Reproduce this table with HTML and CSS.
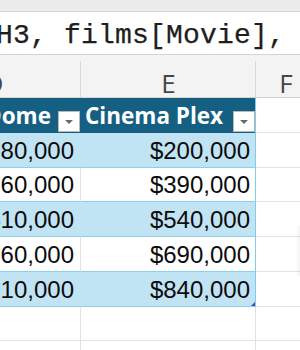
FILE: index.html
```html
<!DOCTYPE html>
<html>
<head>
<meta charset="utf-8">
<link rel="stylesheet" href="styles.css">
</head>
<body>
<div class="topband"></div>
<div class="formula"><span class="ftext">H3, films[Movie],</span></div>
<div class="sheet">
  <div class="colhead">D</div>
  <div class="colhead">E</div>
  <div class="colhead last">F</div>

  <div class="th lead"><span class="lbl">Cinema Dome</span><span class="dd"></span></div>
  <div class="th"><span class="lbl">Cinema Plex</span><span class="dd"></span></div>
  <div class="cell"></div>

  <div class="td d band">$180,000</div>
  <div class="td e band">$200,000</div>
  <div class="cell"></div>

  <div class="td d">$360,000</div>
  <div class="td e">$390,000</div>
  <div class="cell"></div>

  <div class="td d band">$410,000</div>
  <div class="td e band">$540,000</div>
  <div class="cell"></div>

  <div class="td d">$560,000</div>
  <div class="td e">$690,000</div>
  <div class="cell"></div>

  <div class="td d band">$510,000</div>
  <div class="td e band corner">$840,000</div>
  <div class="cell"></div>

  <div class="cell grid"></div>
  <div class="cell grid"></div>
  <div class="cell"></div>

  <div class="cell grid"></div>
  <div class="cell grid"></div>
  <div class="cell"></div>
</div>
<div class="pane-shadow"></div>
</body>
</html>
```

FILE: styles.css
```css
html, body {
  margin: 0;
  padding: 0;
  width: 300px;
  height: 350px;
  overflow: hidden;
  background: #ffffff;
  position: relative;
}

.topband {
  height: 11px;
  background: #ececec;
  border-bottom: 1px solid #d6d6d6;
}

.formula {
  box-sizing: border-box;
  height: 43px;
  padding-top: 5px;
  background: #ffffff;
  border-bottom: 1px solid #d4d4d4;
  white-space: nowrap;
  overflow: hidden;
  font-family: "Liberation Mono", "DejaVu Sans Mono", monospace;
  font-size: 28px;
  letter-spacing: 0.2px;
  line-height: 37px;
  color: #1e1e1e;
  -webkit-text-stroke: 0.25px #1e1e1e;
}

.ftext {
  display: block;
  margin-left: -4px;
}

.sheet {
  display: grid;
  grid-template-columns: 174px 175px 60px;
  grid-template-rows: 43px 35px 35px 34px 35px 35px 35px 34px 34px;
  margin-left: -93px;
}

.colhead {
  box-sizing: border-box;
  background: #f3f3f3 linear-gradient(#d8d8d8, #d8d8d8) right 6px / 1px calc(100% - 6px) no-repeat;
  border-bottom: 1px solid #d4d4d4;
  font-family: "Open Sans", sans-serif;
  font-size: 26px;
  color: #454545;
  display: flex;
  justify-content: center;
  align-items: flex-end;
  line-height: 1;
  padding-bottom: 1px;
}

.colhead.last {
  background: #f3f3f3;
}

.th {
  box-sizing: border-box;
  background: #156082;
  color: #ffffff;
  font-family: "Open Sans", sans-serif;
  font-weight: 700;
  font-size: 22.5px;
  line-height: 1;
  display: flex;
  align-items: flex-end;
  padding-left: 4px;
  border-right: 1px solid #156082;
}

.th + .th {
  border-right: 1px solid #83caeb;
}

.th .lbl {
  flex: 1;
  padding-bottom: 6px;
  white-space: nowrap;
}

.th.lead {
  justify-content: flex-end;
}

.th.lead .lbl {
  flex: none;
  margin-right: 7px;
}

.dd {
  flex: none;
  box-sizing: border-box;
  width: 22px;
  height: 21px;
  margin-bottom: 1px;
  background: #ffffff;
  border: 1px solid #b8b8b8;
  display: flex;
  align-items: center;
  justify-content: center;
}

.dd::after {
  content: "";
  width: 0;
  height: 0;
  border-left: 4px solid transparent;
  border-right: 4px solid transparent;
  border-top: 4px solid #6a6a6a;
}

.td {
  box-sizing: border-box;
  background: #ffffff;
  border-bottom: 1px solid #8fcfee;
  font-family: "Liberation Sans", Arial, sans-serif;
  font-size: 24px;
  line-height: 1.15;
  color: #0c0c0c;
  display: flex;
  justify-content: flex-end;
  align-items: flex-end;
  padding-right: 5px;
  padding-bottom: 2px;
  white-space: nowrap;
  overflow: hidden;
}

.td.d {
  border-right: 1px solid #e2e2e2;
  padding-right: 6px;
}

.td.e {
  border-right: 1px solid #83caeb;
}

.td.band {
  background: #c1e4f5;
}

.td.d.band {
  border-right-color: #c1e4f5;
}

.td.corner {
  position: relative;
}

.td.corner::after {
  content: "";
  position: absolute;
  right: 0;
  bottom: 0;
  width: 0;
  height: 0;
  border-left: 4px solid transparent;
  border-bottom: 4px solid #3d4fb0;
}

.cell {
  box-sizing: border-box;
  border-bottom: 1px solid #e2e2e2;
}

.cell.grid {
  border-right: 1px solid #e2e2e2;
}

.pane-shadow {
  position: absolute;
  right: 0;
  top: 226px;
  width: 4px;
  height: 50px;
  background: linear-gradient(to right, rgba(0,0,0,0), rgba(0,0,0,0.05));
}
```
